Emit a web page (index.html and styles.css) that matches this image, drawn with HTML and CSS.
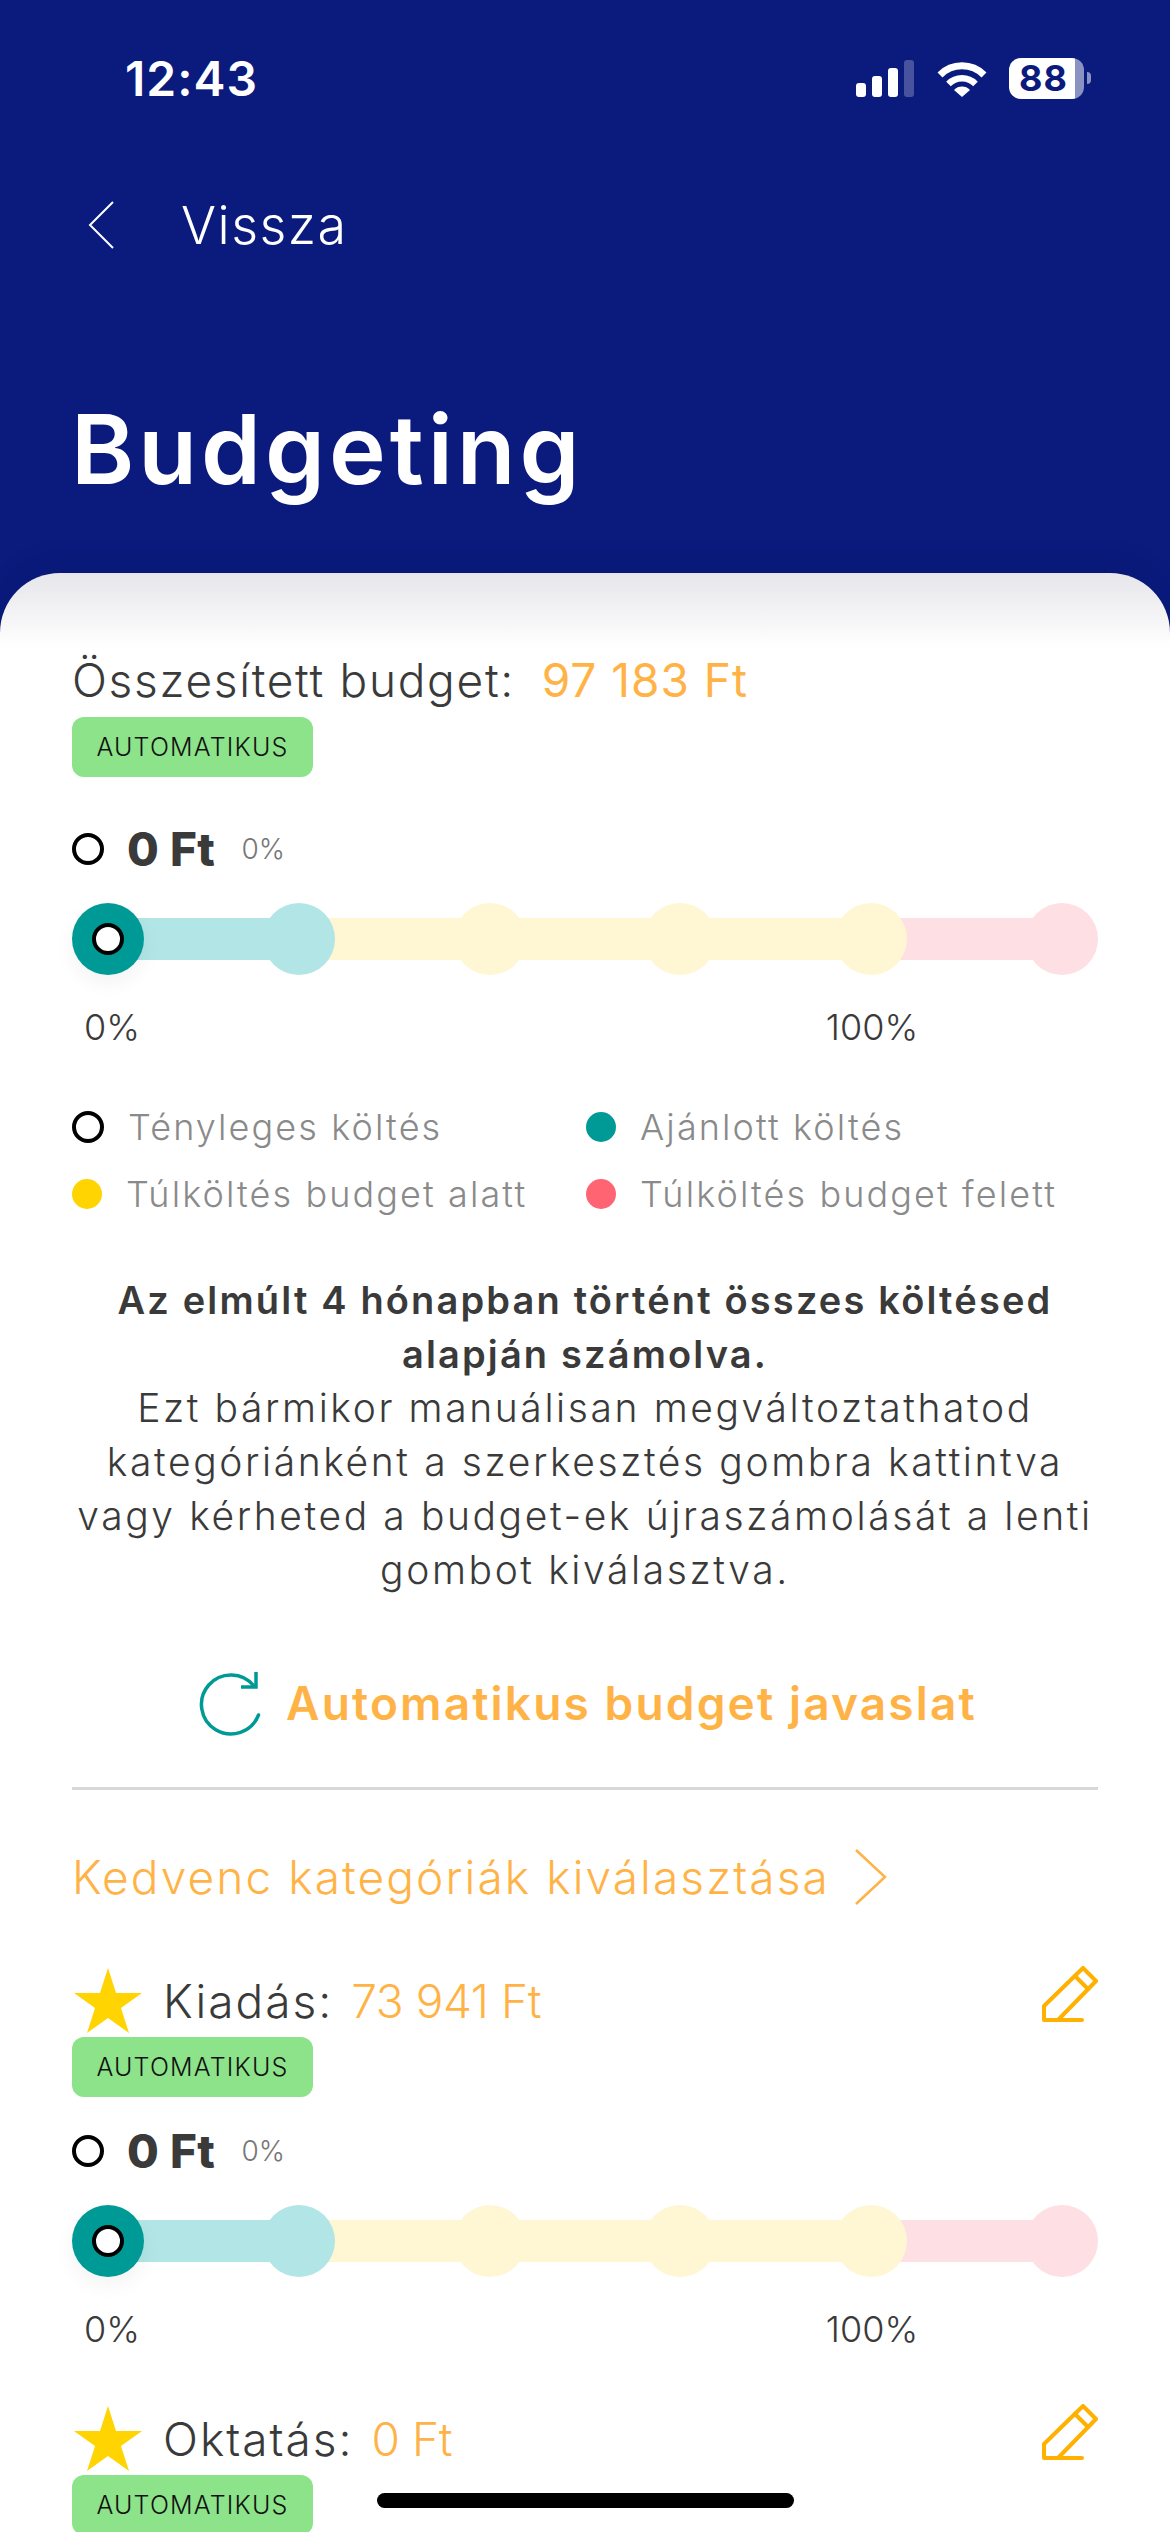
FILE: index.html
```html
<!DOCTYPE html>
<html lang="hu">
<head>
  <meta charset="utf-8">
  <meta name="viewport" content="width=device-width">
  <title>Budgeting</title>
  <link rel="stylesheet" href="styles.css">
</head>
<body>
  <div class="page">
    <header class="top">
      <div class="status">
        <span class="time">12:43</span>
        <div class="status-icons">
          <div class="signal"><i class="s1"></i><i class="s2"></i><i class="s3"></i><i class="s4"></i></div>
          <svg class="wifi" viewBox="0 0 50 37" fill="none" stroke="#fff">
            <path d="M3 15 A31 31 0 0 1 47 15" stroke-width="7"/>
            <path d="M11.500 24 A19 19 0 0 1 38.500 24" stroke-width="6.500"/>
            <path d="M17 30 A11 11 0 0 1 33 30 L25 37 Z" fill="#fff" stroke="none"/>
          </svg>
          <div class="battery"><span class="battery-level">88</span><i class="battery-nub"></i></div>
        </div>
      </div>
      <div class="back">
        <svg class="back-icon" viewBox="0 0 26 48" fill="none" stroke="#fff" stroke-width="2"><path d="M25 1 L2 24 L25 47"/></svg>
        <span>Vissza</span>
      </div>
      <h1 class="title">Budgeting</h1>
    </header>

    <main class="card">
      <div class="summary">Összesített budget: <span class="amount">97 183 Ft</span></div>
      <div class="tag">AUTOMATIKUS</div>

      <div class="value value-first"><i class="ring"></i><b>0 Ft</b><span>0%</span></div>
      <div class="bar">
        <div class="stop stop-active"><i class="ring"></i></div>
        <div class="stop stop-cyan"></div>
        <div class="stop stop-yellow"></div>
        <div class="stop stop-yellow"></div>
        <div class="stop stop-yellow"></div>
        <div class="stop stop-pink"></div>
      </div>
      <div class="scale"><span>0%</span><span></span><span></span><span></span><span>100%</span></div>

      <div class="legend">
        <div class="legend-item"><i class="ring"></i>Tényleges költés</div>
        <div class="legend-item"><i class="dot dot-teal"></i>Ajánlott költés</div>
        <div class="legend-item"><i class="dot dot-yellow"></i>Túlköltés budget alatt</div>
        <div class="legend-item"><i class="dot dot-red"></i>Túlköltés budget felett</div>
      </div>

      <p class="note"><b>Az elmúlt 4 hónapban történt összes költésed alapján számolva.</b>Ezt bármikor manuálisan megváltoztathatod<br>kategóriánként a szerkesztés gombra kattintva<br>vagy kérheted a budget-ek újraszámolását a lenti<br>gombot kiválasztva.</p>

      <div class="auto">
        <svg class="refresh" viewBox="0 0 62 65" fill="none" stroke="#009a96" stroke-width="3.500" stroke-linecap="round">
          <path d="M55 15 A29.500 29.500 0 1 0 59.500 44"/>
          <path d="M57 1 V16 H42" stroke-linecap="butt"/>
        </svg>
        <span>Automatikus budget javaslat</span>
      </div>

      <hr class="divider">

      <div class="favs">
        <span>Kedvenc kategóriák kiválasztása</span>
        <svg class="favs-icon" viewBox="0 0 32 56" fill="none" stroke="#ffb347" stroke-width="2.500"><path d="M1 1 L30 28 L1 55"/></svg>
      </div>

      <div class="cat-head cat-first">
        <svg class="star" viewBox="0 0 68 65"><path fill="#ffd400" d="M34 0 L42 25 H68 L47 40 L55 65 L34 50 L13 65 L21 40 L0 25 H26 Z"/></svg>
        <span class="cat-name">Kiadás:</span>
        <span class="cat-amount">73 941 Ft</span>
        <svg class="pencil" viewBox="0 0 56 56" fill="none" stroke="#ffb000" stroke-width="4" stroke-linecap="round" stroke-linejoin="round">
          <path d="M2 40 L41 2 L54 15 L16 54 H2 Z"/><path d="M33 10 L46 23"/><path d="M16 54 H40"/>
        </svg>
      </div>
      <div class="tag tag-cat">AUTOMATIKUS</div>

      <div class="value"><i class="ring"></i><b>0 Ft</b><span>0%</span></div>
      <div class="bar">
        <div class="stop stop-active"><i class="ring"></i></div>
        <div class="stop stop-cyan"></div>
        <div class="stop stop-yellow"></div>
        <div class="stop stop-yellow"></div>
        <div class="stop stop-yellow"></div>
        <div class="stop stop-pink"></div>
      </div>
      <div class="scale"><span>0%</span><span></span><span></span><span></span><span>100%</span></div>

      <div class="cat-head cat-next">
        <svg class="star" viewBox="0 0 68 65"><path fill="#ffd400" d="M34 0 L42 25 H68 L47 40 L55 65 L34 50 L13 65 L21 40 L0 25 H26 Z"/></svg>
        <span class="cat-name">Oktatás:</span>
        <span class="cat-amount">0 Ft</span>
        <svg class="pencil" viewBox="0 0 56 56" fill="none" stroke="#ffb000" stroke-width="4" stroke-linecap="round" stroke-linejoin="round">
          <path d="M2 40 L41 2 L54 15 L16 54 H2 Z"/><path d="M33 10 L46 23"/><path d="M16 54 H40"/>
        </svg>
      </div>
      <div class="tag tag-cat">AUTOMATIKUS</div>
    </main>

    <div class="home-bar"></div>
  </div>
</body>
</html>
```

FILE: styles.css
```css
* {
  box-sizing: border-box;
}
body {
  margin: 0;
  font-family: Inter, "Noto Sans", sans-serif;
  color: #3a3a3a;
}
i {
  display: block;
  flex: none;
}

.page {
  position: relative;
  width: 1170px;
  height: 2532px;
  overflow: hidden;
  background: #0a1a7d;
}

/* header */
.top {
  height: 573px;
  padding-top: 39px;
  color: #fff;
}
.status {
  height: 78px;
  padding: 0 79px 0 125px;
  display: flex;
  align-items: center;
  justify-content: space-between;
}
.time {
  font-size: 48px;
  font-weight: 600;
  letter-spacing: 1px;
}
.status-icons {
  display: flex;
  align-items: center;
}
.signal {
  display: flex;
  align-items: flex-end;
  gap: 6px;
  height: 37px;
}
.signal i {
  width: 10px;
  border-radius: 3px;
  background: #fff;
}
.s1 { height: 14px; }
.s2 { height: 21px; }
.s3 { height: 29px; }
.s4 { height: 37px; opacity: 0.25; }
.wifi {
  width: 50px;
  height: 37px;
  margin-left: 23px;
}
.battery {
  display: flex;
  align-items: center;
  margin-left: 22px;
}
.battery-level {
  width: 75px;
  height: 41px;
  border-radius: 12px;
  background: linear-gradient(to right, #fff 66px, #8a92c4 66px);
  color: #0a1a7d;
  font-size: 36px;
  font-weight: 700;
  line-height: 41px;
  padding-left: 10px;
  letter-spacing: 1px;
}
.battery-nub {
  width: 4px;
  height: 12px;
  margin-left: 3px;
  border-radius: 0 4px 4px 0;
  background: #8a92c4;
}
.back {
  display: flex;
  align-items: center;
  height: 60px;
  margin-top: 78px;
  padding-left: 88px;
  font-size: 52px;
  font-weight: 300;
  letter-spacing: 1.5px;
}
.back-icon {
  width: 26px;
  height: 48px;
  margin-right: 67px;
}
.title {
  margin: 139px 0 0 71px;
  font-size: 96px;
  line-height: 110px;
  font-weight: 600;
  letter-spacing: 4px;
}

/* card */
.card {
  height: 1959px;
  padding: 0 72px;
  border-radius: 60px 60px 0 0;
  background: linear-gradient(#e6e6eb, #fff 75px);
  box-shadow: 0 -14px 30px rgba(0, 0, 0, 0.05);
}
.summary {
  padding-top: 79px;
  height: 135px;
  line-height: 56px;
  font-size: 46px;
  font-weight: 300;
  letter-spacing: 1.7px;
  white-space: nowrap;
}
.amount {
  margin-left: 12px;
  font-weight: 400;
  letter-spacing: 1px;
  color: #ffb347;
}
.tag {
  width: 241px;
  height: 60px;
  margin-top: 9px;
  border-radius: 12px;
  background: #8ce38a;
  color: #111;
  font-size: 25px;
  font-weight: 300;
  letter-spacing: 1.2px;
  line-height: 60px;
  text-align: center;
}
.tag-cat {
  margin-top: 4px;
}

.value {
  display: flex;
  align-items: center;
  height: 40px;
  margin-top: 34px;
}
.value-first {
  margin-top: 52px;
}
.value b {
  margin-left: 23px;
  font-size: 46px;
  font-weight: 800;
  letter-spacing: 0.5px;
}
.value span {
  margin-left: 26px;
  font-size: 28px;
  font-weight: 300;
  color: #777;
}
.ring {
  width: 32px;
  height: 32px;
  border: 4px solid #000;
  border-radius: 50%;
  background: #fff;
}

.bar {
  display: flex;
  justify-content: space-between;
  height: 72px;
  margin-top: 34px;
  background: linear-gradient(to right, #b2e5e5 0, #b2e5e5 191px, #fff6d3 191px, #fff6d3 763px, #fedfe3 763px) no-repeat center / 954px 42px;
}
.stop {
  width: 72px;
  height: 72px;
  border-radius: 50%;
  display: flex;
  align-items: center;
  justify-content: center;
}
.stop-active {
  background: #009a96;
  box-shadow: 0 8px 20px rgba(0, 0, 0, 0.05);
}
.stop-cyan { background: #b2e5e5; }
.stop-yellow { background: #fff6d3; }
.stop-pink { background: #fedfe3; }

.scale {
  display: grid;
  grid-template-columns: repeat(6, 1fr);
  height: 40px;
  margin: 32px -59px 0 -55px;
  line-height: 40px;
  font-size: 36px;
  font-weight: 300;
  text-align: center;
}

.legend {
  display: grid;
  grid-template-columns: 514px 1fr;
  row-gap: 23px;
  margin-top: 58px;
}
.legend-item {
  display: flex;
  align-items: center;
  gap: 24px;
  height: 44px;
  font-size: 36px;
  font-weight: 300;
  letter-spacing: 2.1px;
  color: #8a8a8a;
  white-space: nowrap;
}
.dot {
  width: 30px;
  height: 30px;
  border-radius: 50%;
}
.dot-teal { background: #009a96; }
.dot-yellow { background: #ffd400; }
.dot-red { background: #ff6473; }

.note {
  margin: 57px -10px 0;
  font-size: 39px;
  font-weight: 300;
  letter-spacing: 2.6px;
  line-height: 54px;
  text-align: center;
}
.note b {
  display: block;
  padding: 0 40px;
  font-size: 38px;
  font-weight: 600;
  letter-spacing: 2.15px;
}

.auto {
  display: flex;
  align-items: center;
  justify-content: center;
  gap: 25px;
  height: 64px;
  margin-top: 74px;
  padding-left: 6px;
  font-size: 46px;
  font-weight: 600;
  letter-spacing: 2.15px;
  color: #ffb347;
}
.refresh {
  width: 62px;
  height: 65px;
}
.divider {
  height: 3px;
  margin: 52px 0 0;
  border: 0;
  background: #d8d8d8;
}
.favs {
  display: flex;
  align-items: center;
  gap: 25px;
  height: 56px;
  margin-top: 59px;
  font-size: 46px;
  font-weight: 300;
  letter-spacing: 2.1px;
  color: #ffb347;
}
.favs-icon {
  width: 32px;
  height: 56px;
}

.cat-head {
  display: flex;
  align-items: center;
  height: 65px;
  font-size: 46px;
  font-weight: 300;
  letter-spacing: 2px;
}
.cat-first {
  margin-top: 63px;
}
.cat-next {
  margin-top: 57px;
}
.star {
  width: 68px;
  height: 65px;
  margin-left: 2px;
  flex: none;
}
.cat-name {
  margin-left: 21px;
}
.cat-amount {
  margin-left: 18px;
  letter-spacing: -0.4px;
  color: #ffb347;
}
.pencil {
  width: 56px;
  height: 56px;
  margin-left: auto;
  margin-bottom: 14px;
}

.home-bar {
  position: absolute;
  left: 377px;
  top: 2493px;
  width: 417px;
  height: 15px;
  border-radius: 8px;
  background: #000;
}
```
